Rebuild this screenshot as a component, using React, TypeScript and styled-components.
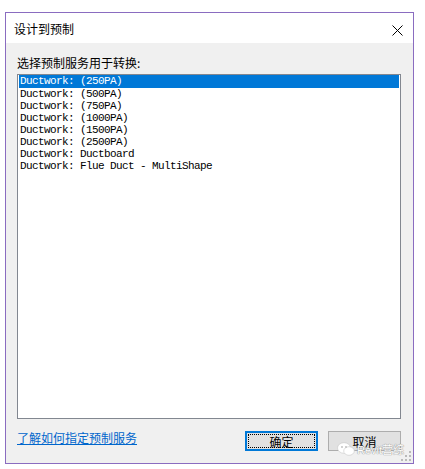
import styled, { createGlobalStyle } from 'styled-components'

const items = [
  'Ductwork: (250PA)',
  'Ductwork: (500PA)',
  'Ductwork: (750PA)',
  'Ductwork: (1000PA)',
  'Ductwork: (1500PA)',
  'Ductwork: (2500PA)',
  'Ductwork: Ductboard',
  'Ductwork: Flue Duct - MultiShape',
]

const GlobalStyle = createGlobalStyle`
  html, body {
    margin: 0;
    padding: 0;
    background: #ffffff;
  }
  body {
    font-family: "Noto Sans CJK SC", "Noto Sans", sans-serif;
  }
`

const Window = styled.div`
  position: relative;
  box-sizing: border-box;
  margin: 12px 0 0 5px;
  width: 409px;
  height: 452px;
  border: 1px solid #8a6cc0;
  display: flex;
  flex-direction: column;
  background: #f0f0f0;
`

const TitleBar = styled.div`
  height: 30px;
  background: #ffffff;
  display: flex;
  align-items: center;
  justify-content: space-between;
  padding: 0 9px 0 8px;
  flex-shrink: 0;
`

const Title = styled.span`
  font-size: 12px;
  color: #000;
  margin-top: 1px;
`

const CloseButton = styled.div`
  width: 14px;
  height: 14px;
  display: flex;
  align-items: center;
  justify-content: center;
  margin-top: 4px;
`

const Body = styled.div`
  flex: 1;
  display: flex;
  flex-direction: column;
  padding: 12px 12px 11px 11px;
`

const Label = styled.div`
  font-size: 12px;
  line-height: 16px;
  color: #000;
  margin-bottom: 3px;
`

const ListBox = styled.div`
  box-sizing: border-box;
  height: 345px;
  background: #ffffff;
  border: 1px solid #828790;
  padding: 0 1px;
`

const Row = styled.div<{ $selected?: boolean }>`
  height: 12px;
  line-height: 12px;
  font-family: "Liberation Mono", "DejaVu Sans Mono", monospace;
  font-size: 11px;
  letter-spacing: -0.6px;
  padding-left: 1px;
  white-space: pre;
  color: ${(p) => (p.$selected ? '#ffffff' : '#000000')};
  background: ${(p) => (p.$selected ? '#0078d7' : 'transparent')};
  ${(p) => (p.$selected ? 'height: 13px; line-height: 13px;' : '')}
`

const Footer = styled.div`
  display: flex;
  align-items: flex-start;
  margin-top: 12px;
`

const HelpLink = styled.a`
  font-size: 12px;
  line-height: 14px;
  color: #0066cc;
  text-decoration: underline;
  flex: 1;
  cursor: pointer;
`

const Button = styled.button<{ $default?: boolean }>`
  box-sizing: border-box;
  width: 73px;
  height: 20px;
  padding: 0;
  font-family: "Noto Sans CJK SC", sans-serif;
  font-size: 12px;
  color: #000;
  background: #e1e1e1;
  border: ${(p) => (p.$default ? '2px solid #0078d7' : '1px solid #adadad')};
  outline: ${(p) => (p.$default ? '1px dotted #000' : 'none')};
  outline-offset: ${(p) => (p.$default ? '-4px' : '0')};
  margin-left: ${(p) => (p.$default ? '0' : '10px')};
  display: flex;
  align-items: center;
  justify-content: center;
`

const SizeGrip = styled.svg`
  position: absolute;
  right: 2px;
  bottom: 2px;
`

const Watermark = styled.div`
  position: absolute;
  right: 9px;
  bottom: 6px;
  display: flex;
  align-items: center;
  gap: 2px;
  font-family: "Liberation Sans", "Noto Sans CJK SC", sans-serif;
  font-size: 11px;
  color: #ffffff;
  text-shadow: 0 0 1px #8a8a8a, 0 0 1px #8a8a8a;
  pointer-events: none;
`

export default function App() {
  return (
    <>
      <GlobalStyle />
      <Window>
        <TitleBar>
          <Title>设计到预制</Title>
          <CloseButton>
            <svg width="11" height="11" viewBox="0 0 11 11">
              <path d="M0.5 0.5 L10.5 10.5 M10.5 0.5 L0.5 10.5" stroke="#000" strokeWidth="1" />
            </svg>
          </CloseButton>
        </TitleBar>
        <Body>
          <Label>选择预制服务用于转换:</Label>
          <ListBox>
            {items.map((item, i) => (
              <Row key={item} $selected={i === 0}>
                {item}
              </Row>
            ))}
          </ListBox>
          <Footer>
            <HelpLink>了解如何指定预制服务</HelpLink>
            <Button $default>确定</Button>
            <Button>取消</Button>
          </Footer>
        </Body>
        <Watermark>
          <svg width="18" height="14" viewBox="0 0 18 14">
            <ellipse cx="7" cy="6" rx="6.5" ry="5.3" fill="#ffffff" stroke="#c8c8c8" strokeWidth="0.6" />
            <ellipse cx="12" cy="9" rx="5.3" ry="4.3" fill="#ffffff" stroke="#c8c8c8" strokeWidth="0.6" />
            <circle cx="5" cy="5" r="0.9" fill="#bdbdbd" />
            <circle cx="9" cy="5" r="0.9" fill="#bdbdbd" />
          </svg>
          <span>Revit营综</span>
        </Watermark>
        <SizeGrip width="10" height="10" viewBox="0 0 10 10">
          {[
            [8, 0],
            [8, 4],
            [4, 4],
            [8, 8],
            [4, 8],
            [0, 8],
          ].map(([x, y]) => (
            <rect key={`${x}-${y}`} x={x} y={y} width="2" height="2" fill="#b9b9b9" />
          ))}
        </SizeGrip>
      </Window>
    </>
  )
}
